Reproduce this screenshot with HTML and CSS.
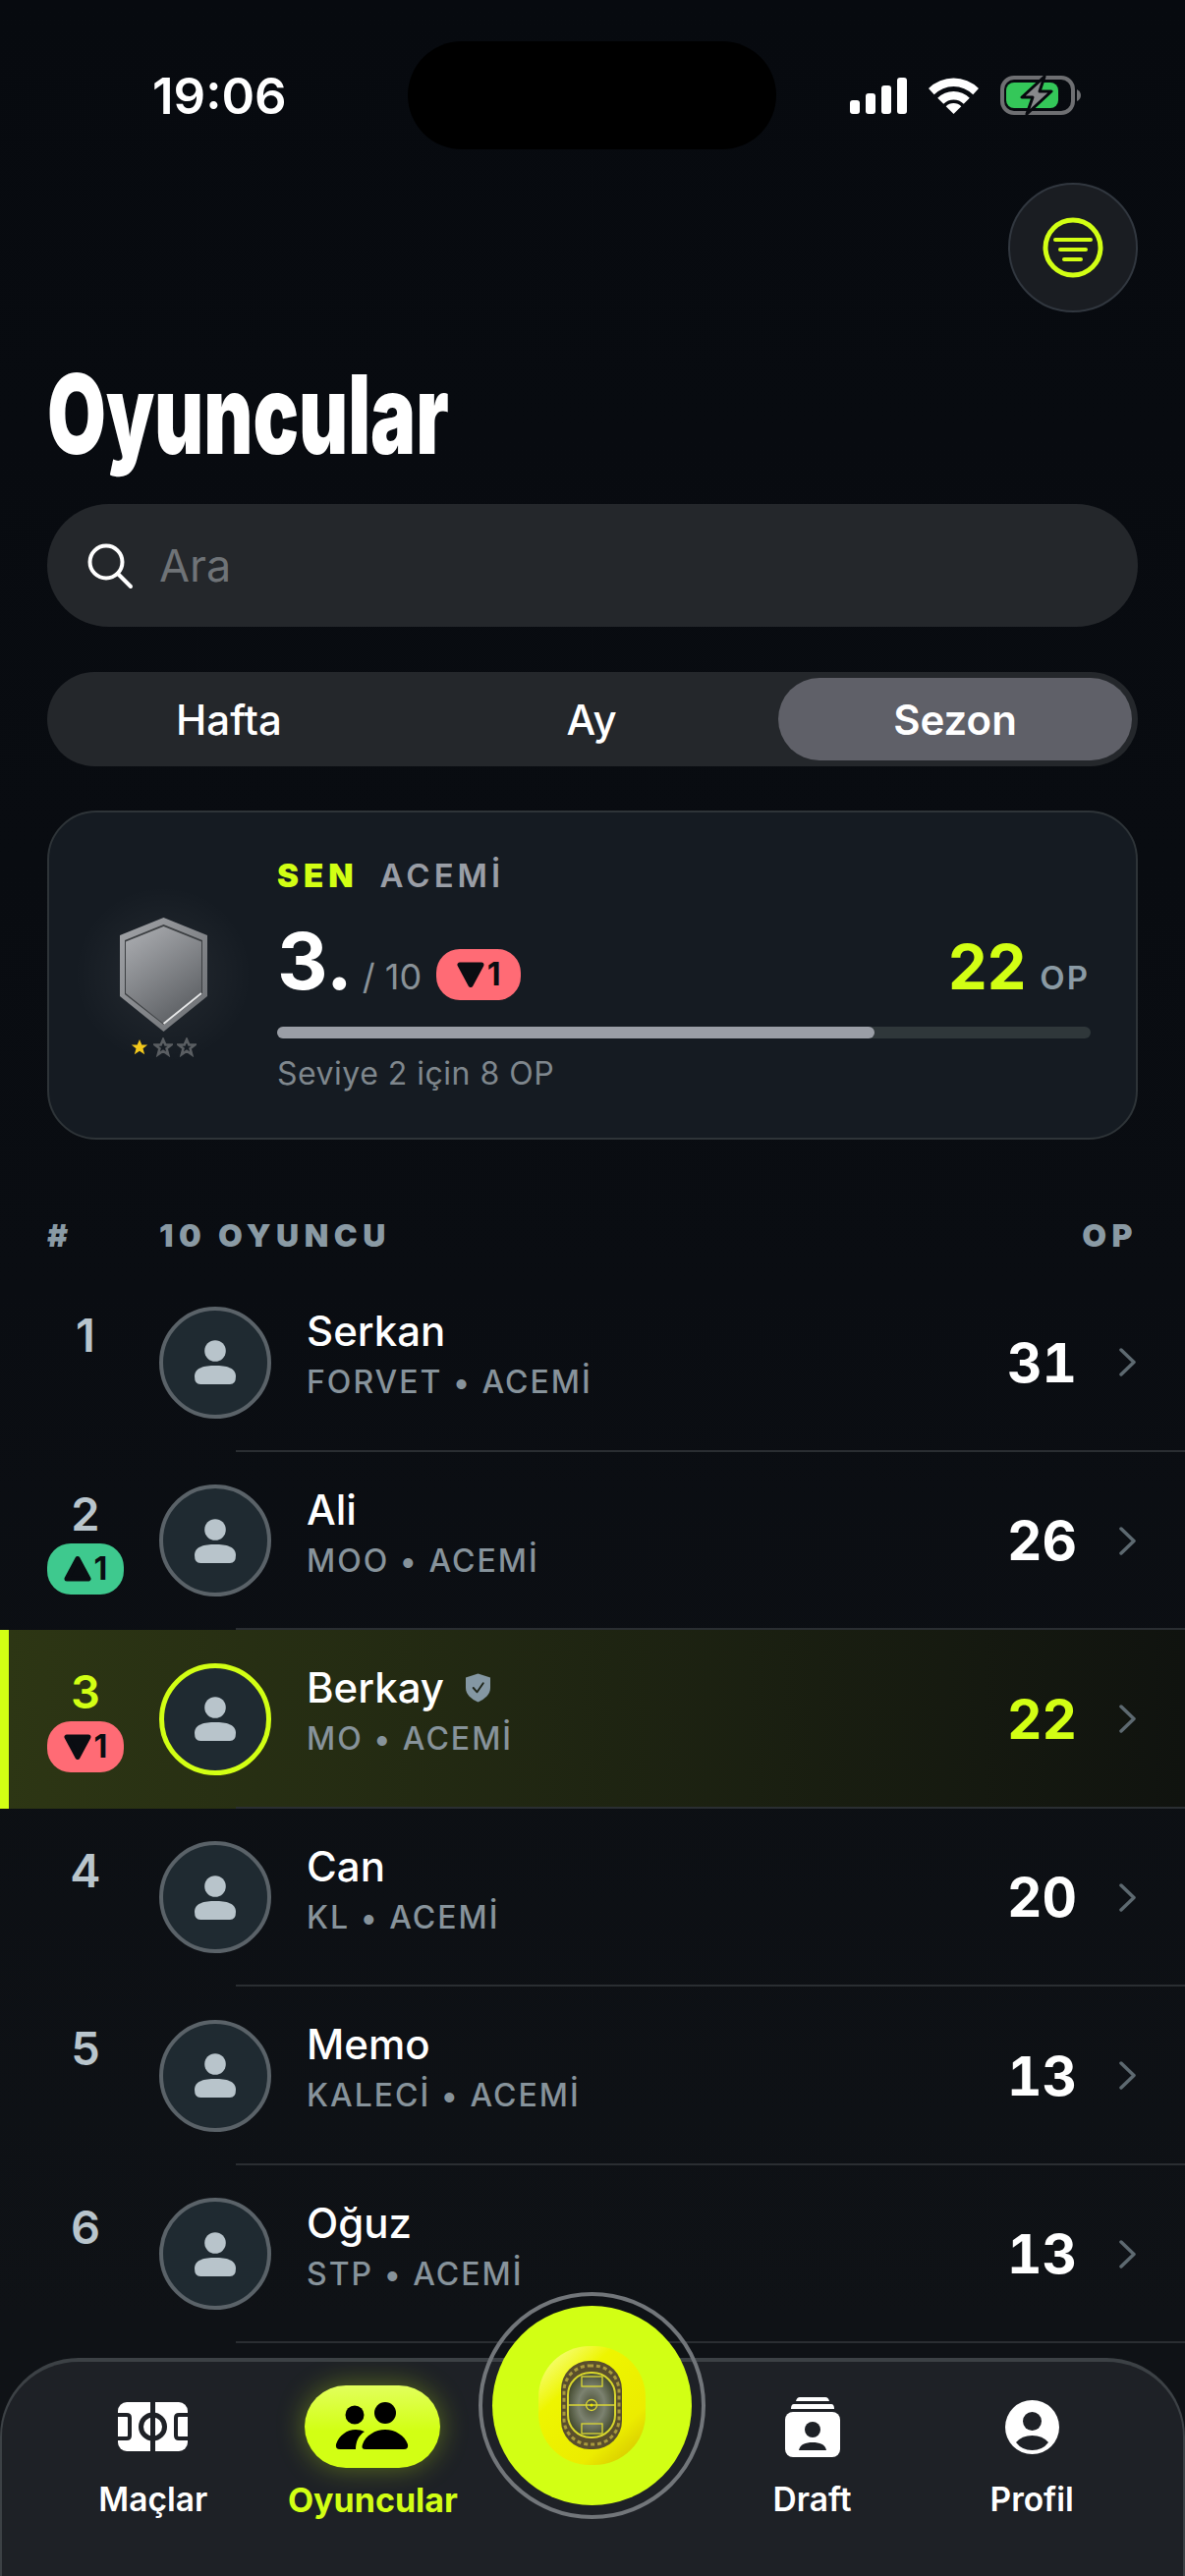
FILE: index.html
```html
<!DOCTYPE html>
<html lang="tr">
<head>
    <meta charset="UTF-8">
    <meta name="viewport" content="width=device-width, initial-scale=1.0">
    <title>Oyuncular</title>
    <link rel="stylesheet" href="styles.css">
</head>
<body>
    <svg class="sprites" width="0" height="0">
        <symbol id="person" viewBox="0 0 42 45">
            <circle cx="21" cy="11" r="10.8"/>
            <path d="M0 37C0 28 10 26 21 26C32 26 42 28 42 37Q42 45 36 45H6Q0 45 0 37Z"/>
        </symbol>
        <symbol id="chevron" viewBox="0 0 19 29">
            <path d="M3 2L16 14.5L3 27" fill="none" stroke="currentColor" stroke-width="3.5" stroke-linecap="round" stroke-linejoin="round"/>
        </symbol>
        <symbol id="tri-up" viewBox="0 0 28 27">
            <path d="M14 3.5L25 24H3Z" stroke="currentColor" stroke-width="5" stroke-linejoin="round" fill="currentColor"/>
        </symbol>
        <symbol id="tri-down" viewBox="0 0 28 27">
            <path d="M3 3H25L14 23.5Z" stroke="currentColor" stroke-width="5" stroke-linejoin="round" fill="currentColor"/>
        </symbol>
        <symbol id="star" viewBox="0 0 24 24">
            <path d="M12 2.5L14.8 9H21.8L16.2 13.4L18.2 20.8L12 16.6L5.8 20.8L7.8 13.4L2.2 9H9.2Z"/>
        </symbol>
    </svg>

    <div class="screen">
        <!-- Durum çubuğu -->
        <div class="status-bar">
            <div class="status-time">19:06</div>
            <div class="island"></div>
            <div class="status-icons">
                <svg width="58" height="37" viewBox="0 0 58 37" fill="#fff">
                    <rect x="0" y="23" width="10" height="14" rx="3"/>
                    <rect x="16" y="16" width="10" height="21" rx="3"/>
                    <rect x="32" y="8" width="10" height="29" rx="3"/>
                    <rect x="48" y="0" width="10" height="37" rx="3"/>
                </svg>
                <svg width="51" height="37" viewBox="0 0 51 37" fill="#fff">
                    <path d="M0 11A36.5 36.5 0 0 1 51 11L45.3 17.2A28 28 0 0 0 5.7 17.2Z"/>
                    <path d="M9.2 20.7A23 23 0 0 1 41.8 20.7L35.75 26.75A14.5 14.5 0 0 0 15.25 26.75Z"/>
                    <path d="M17.7 29.2A11 11 0 0 1 33.3 29.2L25.5 37Z"/>
                </svg>
                <svg width="82" height="40" viewBox="0 0 82 40">
                    <rect x="2" y="2" width="72" height="36" rx="12" fill="none" stroke="#6e6f72" stroke-width="4"/>
                    <rect x="6" y="7" width="53" height="26" rx="8" fill="#34c759"/>
                    <path d="M78 14Q82 16 82 20Q82 24 78 26Z" fill="#6e6f72"/>
                    <path d="M45 1L22 22H33L27 39L52 16H40Z" fill="#87888b" stroke="#07090e" stroke-width="3" stroke-linejoin="round"/>
                </svg>
            </div>
        </div>

        <div class="top-actions">
            <button class="filter-btn">
                <svg width="62" height="62" viewBox="0 0 62 62" fill="none" stroke="#d2ff14" stroke-linecap="round">
                    <circle cx="31" cy="31" r="28" stroke-width="5"/>
                    <path d="M13 23H49" stroke-width="4"/>
                    <path d="M18 33H44" stroke-width="4"/>
                    <path d="M22 43H39" stroke-width="4"/>
                </svg>
            </button>
        </div>

        <h1 class="page-title"><span>Oyuncular</span></h1>

        <div class="search-box">
            <svg width="48" height="48" viewBox="0 0 48 48" fill="none" stroke="#fff" stroke-width="4" stroke-linecap="round">
                <circle cx="20" cy="20" r="16.5"/>
                <path d="M32 32L45 45"/>
            </svg>
            <span class="search-text">Ara</span>
        </div>

        <div class="segments">
            <div class="segment seg-week">Hafta</div>
            <div class="segment seg-month">Ay</div>
            <div class="segment seg-season active">Sezon</div>
        </div>

        <!-- Kendi sıralama kartı -->
        <div class="me-card">
            <div class="me-badge">
                <svg width="89" height="116" viewBox="0 0 89 116">
                    <defs>
                        <linearGradient id="shieldEdge" x1="0" y1="0" x2="1" y2="1">
                            <stop offset="0" stop-color="#a2a4a8"/>
                            <stop offset="1" stop-color="#6a6d71"/>
                        </linearGradient>
                        <linearGradient id="shieldFace" x1="0.15" y1="0" x2="0.7" y2="1">
                            <stop offset="0" stop-color="#a9abaf"/>
                            <stop offset="1" stop-color="#5b5e62"/>
                        </linearGradient>
                    </defs>
                    <path d="M44.5 0L89 18V80L44.5 116L0 80V18Z" fill="url(#shieldEdge)"/>
                    <path d="M44.5 7L84 23V78L44.5 109L5 78V23Z" fill="#3d4043"/>
                    <path d="M44.5 9L83 24.5V77L44.5 108L6 77V24.5Z" fill="url(#shieldFace)"/>
                    <path d="M44.5 108L83 77" fill="none" stroke="#e6e7e8" stroke-width="2"/>
                </svg>
                <div class="stars">
                    <svg width="20" height="20" class="star-on"><use href="#star"/></svg>
                    <svg width="20" height="20" class="star-off"><use href="#star"/></svg>
                    <svg width="20" height="20" class="star-off"><use href="#star"/></svg>
                </div>
            </div>
            <div class="me-body">
                <div class="me-label"><span class="me-you">SEN</span><span class="me-level">ACEMİ</span></div>
                <div class="me-stats">
                    <span class="me-rank">3.</span>
                    <span class="me-total">/ 10</span>
                    <span class="change down me-change"><svg width="28" height="27"><use href="#tri-down"/></svg>1</span>
                    <span class="me-points">22</span>
                    <span class="me-unit">OP</span>
                </div>
                <div class="progress"><div class="progress-fill"></div></div>
                <div class="me-hint">Seviye 2 için 8 OP</div>
            </div>
        </div>

        <div class="list-head">
            <span class="list-hash">#</span>
            <span class="list-count">10 OYUNCU</span>
            <span>OP</span>
        </div>

        <!-- Oyuncu listesi -->
        <div class="player-list">
            <div class="player-row">
                <div class="rank-col"><div class="rank">1</div></div>
                <div class="avatar"><svg width="42" height="45"><use href="#person"/></svg></div>
                <div class="player-info">
                    <div class="player-name">Serkan</div>
                    <div class="player-sub">FORVET • ACEMİ</div>
                </div>
                <div class="player-points">31</div>
                <svg class="chevron" width="19" height="29"><use href="#chevron"/></svg>
            </div>
            <div class="player-row">
                <div class="rank-col">
                    <div class="rank">2</div>
                    <div class="change up"><svg width="28" height="27"><use href="#tri-up"/></svg>1</div>
                </div>
                <div class="avatar"><svg width="42" height="45"><use href="#person"/></svg></div>
                <div class="player-info">
                    <div class="player-name">Ali</div>
                    <div class="player-sub">MOO • ACEMİ</div>
                </div>
                <div class="player-points">26</div>
                <svg class="chevron" width="19" height="29"><use href="#chevron"/></svg>
            </div>
            <div class="player-row me">
                <div class="rank-col">
                    <div class="rank">3</div>
                    <div class="change down"><svg width="28" height="27"><use href="#tri-down"/></svg>1</div>
                </div>
                <div class="avatar"><svg width="42" height="45"><use href="#person"/></svg></div>
                <div class="player-info">
                    <div class="player-name">Berkay
                        <svg class="verified" width="25" height="30" viewBox="0 0 26 30">
                            <path d="M13 0L26 4V15C26 22 20 27 13 30C6 27 0 22 0 15V4Z" fill="#8497a3"/>
                            <path d="M8 15L12 19.5L18.5 10" fill="none" stroke="#20261a" stroke-width="2" stroke-linecap="round" stroke-linejoin="round"/>
                        </svg>
                    </div>
                    <div class="player-sub">MO • ACEMİ</div>
                </div>
                <div class="player-points">22</div>
                <svg class="chevron" width="19" height="29"><use href="#chevron"/></svg>
            </div>
            <div class="player-row">
                <div class="rank-col"><div class="rank">4</div></div>
                <div class="avatar"><svg width="42" height="45"><use href="#person"/></svg></div>
                <div class="player-info">
                    <div class="player-name">Can</div>
                    <div class="player-sub">KL • ACEMİ</div>
                </div>
                <div class="player-points">20</div>
                <svg class="chevron" width="19" height="29"><use href="#chevron"/></svg>
            </div>
            <div class="player-row">
                <div class="rank-col"><div class="rank">5</div></div>
                <div class="avatar"><svg width="42" height="45"><use href="#person"/></svg></div>
                <div class="player-info">
                    <div class="player-name">Memo</div>
                    <div class="player-sub">KALECİ • ACEMİ</div>
                </div>
                <div class="player-points">13</div>
                <svg class="chevron" width="19" height="29"><use href="#chevron"/></svg>
            </div>
            <div class="player-row">
                <div class="rank-col"><div class="rank">6</div></div>
                <div class="avatar"><svg width="42" height="45"><use href="#person"/></svg></div>
                <div class="player-info">
                    <div class="player-name">Oğuz</div>
                    <div class="player-sub">STP • ACEMİ</div>
                </div>
                <div class="player-points">13</div>
                <svg class="chevron" width="19" height="29"><use href="#chevron"/></svg>
            </div>
        </div>

        <!-- Alt menü -->
        <nav class="tab-bar">
            <div class="tab">
                <div class="tab-icon">
                    <svg width="71" height="50" viewBox="0 0 71 50">
                        <rect width="71" height="50" rx="9" fill="#fff"/>
                        <g fill="none" stroke="#1e2126">
                            <path d="M35.5 0V50" stroke-width="5"/>
                            <circle cx="35.5" cy="25" r="12" stroke-width="5"/>
                            <path d="M0 13H9Q12 13 12 16V34Q12 37 9 37H0" stroke-width="4"/>
                            <path d="M71 13H62Q59 13 59 16V34Q59 37 62 37H71" stroke-width="4"/>
                        </g>
                    </svg>
                </div>
                <span>Maçlar</span>
            </div>
            <div class="tab active">
                <div class="tab-icon">
                    <div class="tab-pill">
                        <svg width="80" height="50" viewBox="0 0 80 50">
                            <circle cx="53" cy="11" r="11"/>
                            <circle cx="22" cy="13" r="9.5"/>
                            <path d="M33 48Q28 48 30 43C33 34 43 28 53 28C63 28 73 34 76 43Q77 48 72 48Z"/>
                            <path d="M7 48Q2 48 3 43C6 34 14 28 23 28Q28 28 32 30C26 34 23 40 23 48Z"/>
                        </svg>
                    </div>
                </div>
                <span>Oyuncular</span>
            </div>
            <div class="tab tab-spacer"></div>
            <div class="tab">
                <div class="tab-icon">
                    <svg width="56" height="61" viewBox="0 0 56 61" fill="#fff">
                        <path d="M15 0H41Q44 0 45 4H11Q12 0 15 0Z"/>
                        <path d="M9 7H47Q50 7 50 12H6Q6 7 9 7Z"/>
                        <rect y="15" width="56" height="46" rx="8"/>
                        <circle cx="28" cy="33" r="8" fill="#1e2126"/>
                        <path d="M14 54C15 48 21 46 28 46C35 46 41 48 42 54Z" fill="#1e2126"/>
                    </svg>
                </div>
                <span>Draft</span>
            </div>
            <div class="tab">
                <div class="tab-icon">
                    <svg width="55" height="55" viewBox="0 0 55 55" fill="#fff">
                        <circle cx="27.5" cy="27.5" r="27.5"/>
                        <circle cx="27.5" cy="21.5" r="9.5" fill="#1e2126"/>
                        <path d="M11 43Q17 36 27.5 36Q38 36 44 43Q38 51 27.5 51Q17 51 11 43Z" fill="#1e2126"/>
                    </svg>
                </div>
                <span>Profil</span>
            </div>
        </nav>

        <!-- Ortadaki yuvarlak buton -->
        <div class="center-ring">
            <div class="center-btn">
                <svg width="109" height="121" viewBox="0 0 109 121">
                    <defs>
                        <linearGradient id="logoRim" x1="0.1" y1="0" x2="0.9" y2="1">
                            <stop offset="0" stop-color="#f8ff90"/>
                            <stop offset="0.3" stop-color="#eef500"/>
                            <stop offset="0.75" stop-color="#ecec00"/>
                            <stop offset="1" stop-color="#d2c200"/>
                        </linearGradient>
                        <radialGradient id="logoField" cx="0.5" cy="0.5" r="0.55">
                            <stop offset="0" stop-color="#4b5037"/>
                            <stop offset="0.5" stop-color="#7c8270"/>
                            <stop offset="1" stop-color="#3d4428"/>
                        </radialGradient>
                    </defs>
                    <rect width="109" height="121" rx="52" fill="url(#logoRim)"/>
                    <rect x="23" y="15" width="62" height="90" rx="29" fill="#5a4e2c"/>
                    <rect x="26" y="20" width="56" height="80" rx="26" fill="none" stroke="#a89a3c" stroke-width="3" stroke-dasharray="4 3"/>
                    <rect x="30" y="27" width="48" height="66" rx="23" fill="url(#logoField)" stroke="#d8d62c" stroke-width="2"/>
                    <g fill="none" stroke="#dcd934" stroke-width="1.3">
                        <path d="M30 60H78"/>
                        <circle cx="54" cy="60" r="5.5"/>
                        <rect x="44" y="31" width="21" height="10"/>
                        <rect x="44" y="79" width="21" height="10"/>
                    </g>
                    <circle cx="54" cy="60" r="1.6" fill="#efe800"/>
                </svg>
            </div>
        </div>
    </div>
</body>
</html>
```

FILE: styles.css
```css
* {
    box-sizing: border-box;
    font-family: 'Inter', 'Liberation Sans', sans-serif;
}
body {
    margin: 0;
    background-color: #080b10;
}
.sprites {
    position: absolute;
}
.screen {
    position: relative;
    width: 1206px;
    height: 2622px;
    overflow: hidden;
    color: #fff;
    background: linear-gradient(#070a0f 0%, #0a0d12 50%, #0f1216 90%);
}

/* Durum çubuğu */
.status-bar {
    display: flex;
    align-items: center;
    height: 194px;
    padding: 42px 106px 42px 155px;
}
.status-time {
    width: 260px;
    font-size: 51px;
    font-weight: 600;
}
.island {
    width: 375px;
    height: 110px;
    background: #000;
    border-radius: 55px;
}
.status-icons {
    display: flex;
    align-items: center;
    gap: 22px;
    margin-left: auto;
}

.top-actions {
    display: flex;
    justify-content: flex-end;
    margin-top: -8px;
    padding: 0 48px;
}
.filter-btn {
    display: flex;
    align-items: center;
    justify-content: center;
    width: 132px;
    height: 132px;
    padding: 0;
    background: #1a1d22;
    border: 2px solid #31373f;
    border-radius: 50%;
}

.page-title {
    height: 130px;
    margin: 38px 0 0 48px;
    font-size: 112px;
    line-height: 130px;
    font-weight: 900;
}
.page-title span {
    display: inline-block;
    transform: scaleX(0.69);
    transform-origin: left center;
}

.search-box {
    display: flex;
    align-items: center;
    gap: 26px;
    height: 125px;
    margin: 27px 48px 0;
    padding-left: 40px;
    background: #24272b;
    border-radius: 63px;
}
.search-text {
    color: #6f7377;
    font-size: 45px;
}

.segments {
    display: flex;
    height: 96px;
    margin: 46px 48px 0;
    padding: 6px;
    background: #24272b;
    border-radius: 48px;
}
.segment {
    display: flex;
    align-items: center;
    justify-content: center;
    font-size: 42px;
    font-weight: 500;
    border-radius: 42px;
}
.seg-week {
    width: 358px;
}
.seg-month {
    width: 380px;
}
.seg-season {
    width: 360px;
}
.segment.active {
    background: #5f6068;
    font-weight: 600;
}

/* Kart */
.me-card {
    display: flex;
    height: 335px;
    margin: 45px 48px 0;
    background: #151b22;
    border: 2px solid #2e3438;
    border-radius: 50px;
}
.me-badge {
    display: flex;
    flex-direction: column;
    align-items: center;
    width: 232px;
    padding-top: 107px;
    background: radial-gradient(circle at 116px 165px, rgba(255,255,255,0.07), rgba(255,255,255,0) 90px);
}
.stars {
    display: flex;
    gap: 4px;
    margin-top: 6px;
}
.star-on {
    fill: #f2c81c;
}
.star-off {
    fill: none;
    stroke: #5a5e62;
    stroke-width: 3;
}
.me-body {
    flex: 1;
    padding: 47px 46px 0 0;
}
.me-label {
    display: flex;
    gap: 22px;
    font-size: 33px;
    line-height: 34px;
}
.me-you {
    color: #d2ff14;
    font-weight: 900;
    letter-spacing: 5px;
}
.me-level {
    color: #9a9ea6;
    font-weight: 600;
    letter-spacing: 4px;
}
.me-stats {
    display: flex;
    align-items: baseline;
    height: 76px;
    margin-top: 32px;
}
.me-rank {
    font-size: 80px;
    line-height: 76px;
    font-weight: 700;
}
.me-total {
    margin-left: 10px;
    color: #8a9298;
    font-size: 36px;
}
.me-points {
    margin-left: auto;
    color: #d2ff14;
    font-size: 63px;
    font-weight: 700;
}
.me-unit {
    margin-left: 14px;
    margin-right: 1px;
    color: #8a9aa4;
    font-size: 33px;
    font-weight: 600;
    letter-spacing: 2px;
}
.progress {
    height: 12px;
    margin-top: 29px;
    background: #2f373a;
    border-radius: 6px;
}
.progress-fill {
    width: 73.4%;
    height: 100%;
    background: #9a9ea6;
    border-radius: 6px;
}
.me-hint {
    margin-top: 16px;
    color: #7f878d;
    font-size: 32px;
    letter-spacing: 0.5px;
}

/* Rozet: sıra değişimi */
.change {
    display: flex;
    align-items: center;
    justify-content: center;
    gap: 3px;
    width: 78px;
    height: 52px;
    margin-top: 1px;
    color: #0a0d12;
    font-size: 32px;
    line-height: 52px;
    font-weight: 700;
    border-radius: 24px;
}
.change.up {
    background: #3ec98e;
}
.change.down {
    background: #ff6b75;
}
.me-change {
    align-self: flex-end;
    width: 86px;
    margin: 0 0 -2px 15px;
}

.list-head {
    display: flex;
    height: 40px;
    margin-top: 78px;
    padding: 0 48px;
    color: #8a9aa4;
    font-size: 32px;
    line-height: 40px;
    font-weight: 900;
    letter-spacing: 5.5px;
}
.list-hash {
    width: 114px;
}
.list-count {
    flex: 1;
}

/* Satırlar */
.player-list {
    margin-top: 18px;
}
.player-row {
    position: relative;
    display: flex;
    align-items: center;
    height: 181.5px;
    padding: 0 49px 0 48px;
}
.player-row::after {
    content: "";
    position: absolute;
    left: 240px;
    right: 0;
    bottom: 0;
    height: 2px;
    background: #2a2e32;
}
.player-row.me {
    padding-left: 39px;
    background: linear-gradient(90deg, #2d3614, #10130f);
    border-left: 9px solid #d2ff14;
}
.player-row.me::after {
    left: 231px;
}
.rank-col {
    align-self: flex-start;
    width: 78px;
    padding-top: 34px;
    text-align: center;
}
.rank {
    height: 58px;
    color: #b9c5cc;
    font-size: 47px;
    line-height: 58px;
    font-weight: 600;
}
.me .rank {
    color: #d2ff14;
}
.avatar {
    display: flex;
    align-items: center;
    justify-content: center;
    flex-shrink: 0;
    width: 114px;
    height: 114px;
    margin-left: 36px;
    fill: #b8c4cb;
    background: #1f2a31;
    border: 4px solid #5a6268;
    border-radius: 50%;
}
.me .avatar {
    border: 5px solid #d2ff14;
}
.player-info {
    flex: 1;
    margin-left: 36px;
    padding-bottom: 17px;
}
.player-name {
    display: flex;
    align-items: center;
    gap: 22px;
    height: 52px;
    font-size: 42px;
    line-height: 52px;
    font-weight: 500;
}
.player-sub {
    margin-top: 6px;
    color: #87939b;
    font-size: 32px;
    line-height: 40px;
    font-weight: 500;
    letter-spacing: 2px;
}
.player-points {
    width: 100px;
    text-align: right;
    font-size: 55px;
    font-weight: 700;
    font-variant-numeric: tabular-nums;
}
.me .player-points {
    color: #d2ff14;
}
.chevron {
    margin-left: 42px;
    color: #5d6970;
}

/* Alt menü */
.tab-bar {
    position: absolute;
    left: 0;
    right: 0;
    bottom: 0;
    display: grid;
    grid-template-columns: repeat(5, 1fr);
    height: 222px;
    padding: 0 42px;
    background: #1e2126;
    border-top: 4px solid #3c4145;
    border-left: 2px solid #3c4145;
    border-right: 2px solid #3c4145;
    border-radius: 80px 80px 0 0;
}
.tab {
    display: flex;
    flex-direction: column;
    align-items: center;
    font-size: 33.5px;
    font-weight: 600;
}
.tab-icon {
    display: flex;
    align-items: center;
    justify-content: center;
    height: 84px;
    margin: 24px 0 12px;
}
.tab.active {
    color: #d2ff14;
    font-size: 34px;
    font-weight: 700;
}
.tab-pill {
    display: flex;
    align-items: center;
    justify-content: center;
    width: 138px;
    height: 84px;
    background: linear-gradient(#e2ff5c, #d2ff14 55%);
    border-radius: 42px;
    box-shadow: 0 0 28px rgba(210,255,20,0.35);
}

.center-ring {
    position: absolute;
    left: 487px;
    top: 2333px;
    display: flex;
    align-items: center;
    justify-content: center;
    width: 231px;
    height: 231px;
    border: 4px solid #72767a;
    border-radius: 50%;
}
.center-btn {
    display: flex;
    align-items: center;
    justify-content: center;
    width: 203px;
    height: 203px;
    background: #d2ff14;
    border-radius: 50%;
}
```
